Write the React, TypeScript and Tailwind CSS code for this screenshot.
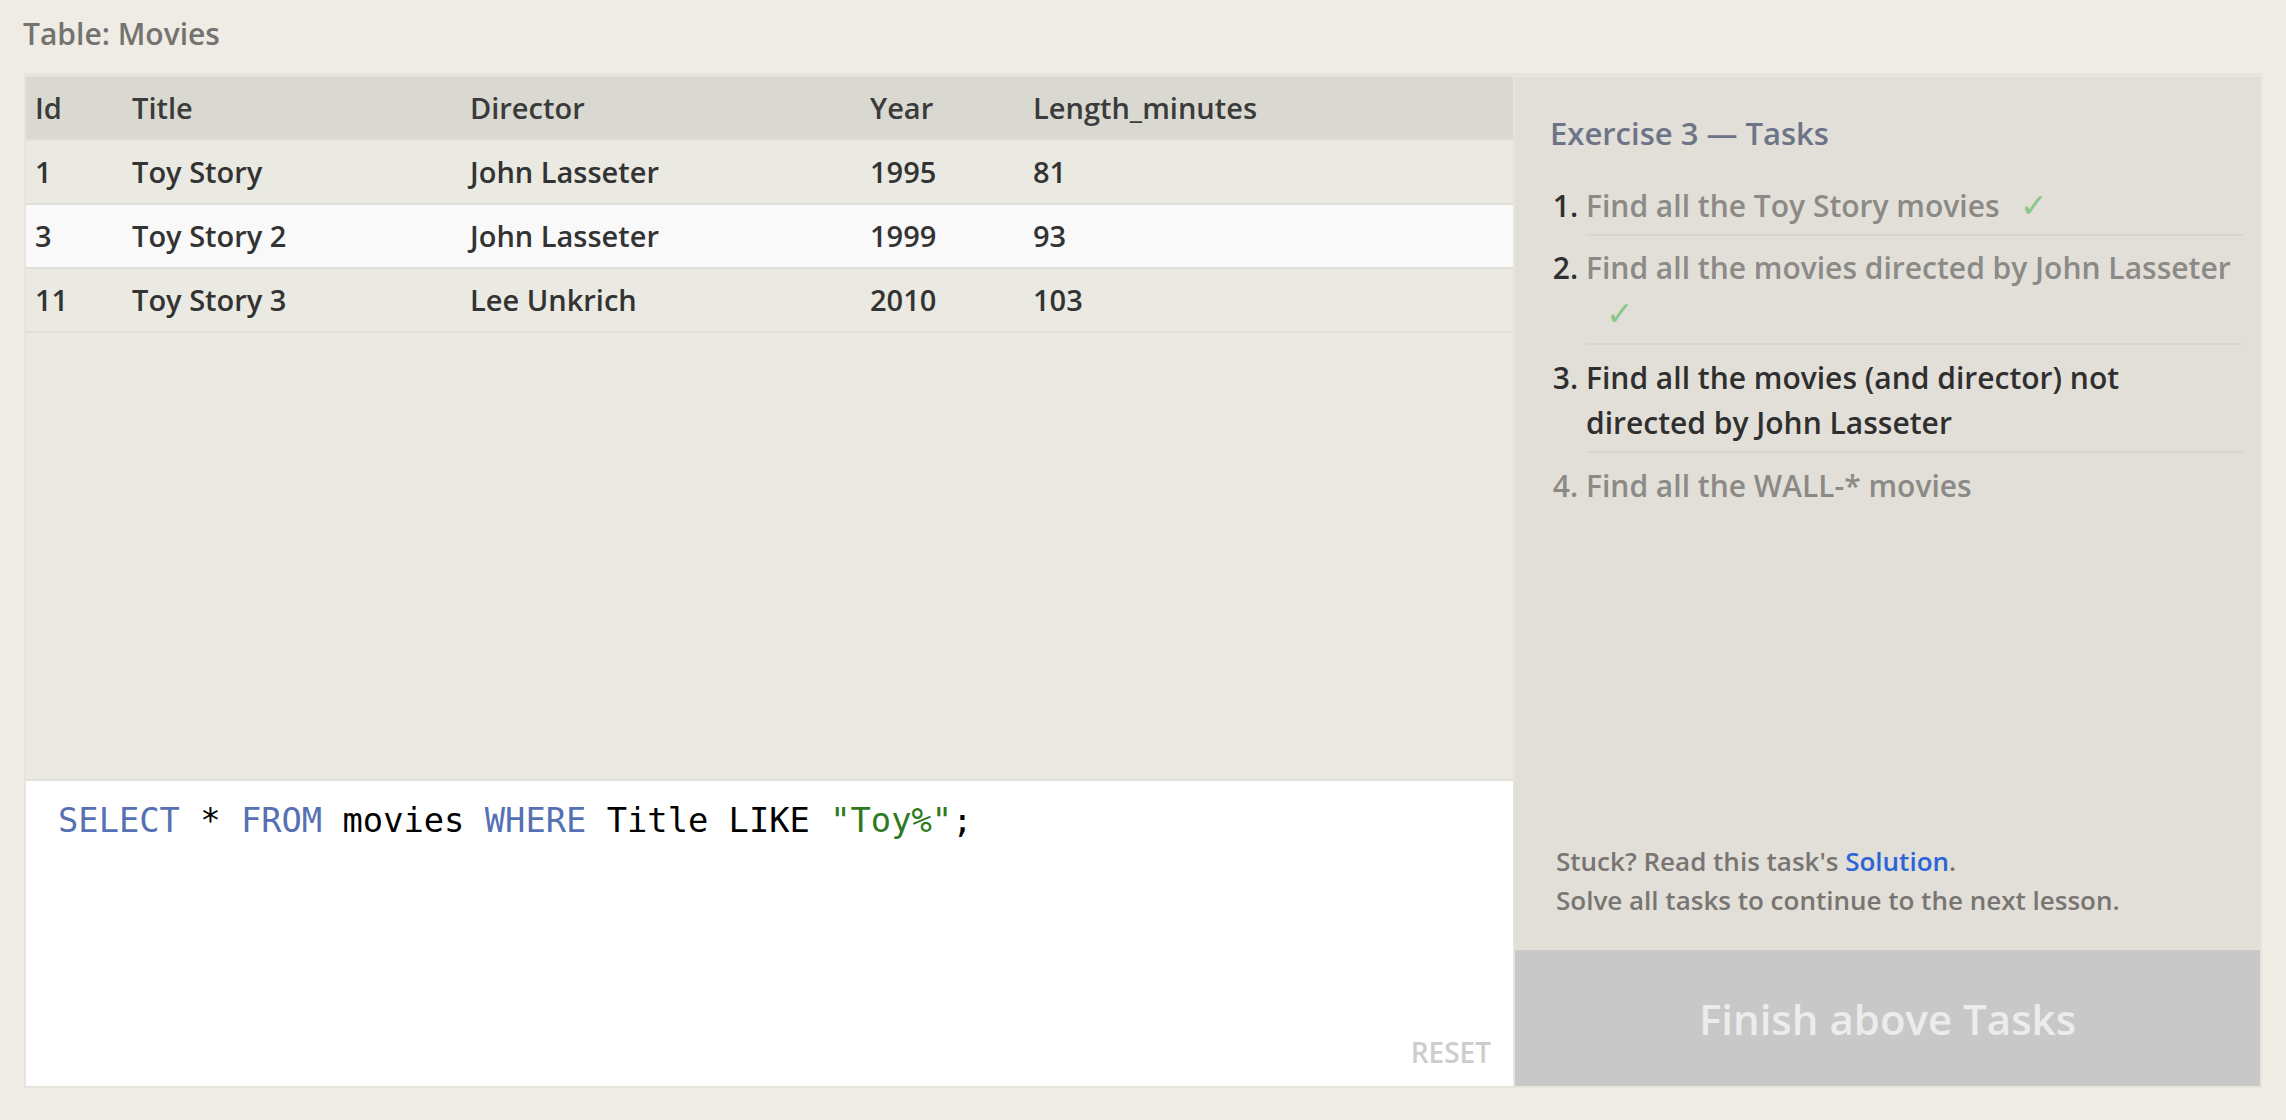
import React from "react"

const rows = [
  { id: "1", title: "Toy Story", director: "John Lasseter", year: "1995", length: "81" },
  { id: "3", title: "Toy Story 2", director: "John Lasseter", year: "1999", length: "93" },
  { id: "11", title: "Toy Story 3", director: "Lee Unkrich", year: "2010", length: "103" },
]

const cols = "grid grid-cols-[97px_338px_400px_163px_1fr] items-center pl-[9px]"

function Check() {
  return <span className="inline-block ml-[20px] text-[33px] text-[#88c788] font-normal">✓</span>
}

export default function App() {
  return (
    <div className="min-h-screen w-full bg-[#efece5] font-['Open_Sans',sans-serif] font-semibold">
      <div className="px-[23px] pt-[14px]">
        <h2 className="text-[30px] leading-[40px] text-[#747370]">Table: Movies</h2>
      </div>

      <div className="mx-[24px] mt-[19px] h-[1015px] flex border-2 border-t-4 border-[#e5e4dd] bg-[#e5e4dd]">
        {/* Left: results + editor */}
        <div className="w-[1487px] flex flex-col bg-[#eae9e2]">
          <div className={`${cols} h-[64px] bg-[#dad9d1] text-[29px] text-[#3b3b3b] border-b-2 border-[#e2e1da]`}>
            <div>Id</div>
            <div>Title</div>
            <div>Director</div>
            <div>Year</div>
            <div>Length_minutes</div>
          </div>
          {rows.map((r, i) => (
            <div
              key={r.id}
              className={`${cols} h-[64px] text-[29px] text-[#333333] border-b-2 border-[#dfded8] ${
                i === 1 ? "bg-[#f9f9f9]" : "bg-[#eae9e2]"
              }`}
            >
              <div>{r.id}</div>
              <div>{r.title}</div>
              <div>{r.director}</div>
              <div>{r.year}</div>
              <div>{r.length}</div>
            </div>
          ))}
          <div className="flex-1" />

          {/* Editor */}
          <div className="h-[307px] border-t-2 border-[#e2e1da] bg-white flex flex-col px-[32px] pt-[18px] pb-[16px]">
            <div className="font-['DejaVu_Sans_Mono',monospace] font-normal text-[33.75px] leading-[44px] text-black whitespace-pre">
              <span className="text-[#5671b3]">SELECT</span> * <span className="text-[#5671b3]">FROM</span> movies{" "}
              <span className="text-[#5671b3]">WHERE</span> Title LIKE <span className="text-[#2d7a1f]">"Toy%"</span>;
            </div>
            <div className="mt-auto self-end mr-[-10px] text-[28px] leading-[36px] text-[#cdcdcd]">RESET</div>
          </div>
        </div>

        {/* Right: tasks */}
        <div className="ml-[2px] flex-1 flex flex-col bg-[#e1dfd8]">
          <div className="pl-[35px] pr-[17px] pt-[34px]">
            <h3 className="text-[31px] leading-[44px] text-[#6d7487]">Exercise 3 — Tasks</h3>
            <ol className="mt-[18px] list-decimal pl-[36px] text-[30px] leading-[45px]">
              <li className="text-[#2f2f2f] pt-[9px] pb-[6px] border-b-2 border-[#d8d6ce]">
                <span className="text-[#8b8a86]">Find all the Toy Story movies</span>
                <Check />
              </li>
              <li className="text-[#2f2f2f] pt-[9px] pb-[7px] border-b-2 border-[#d8d6ce]">
                <span className="text-[#8b8a86]">Find all the movies directed by John Lasseter</span>
                <Check />
              </li>
              <li className="text-[#2f2f2f] pt-[10px] pb-[6px] border-b-2 border-[#d8d6ce]">
                Find all the movies (and director) not directed by John Lasseter
              </li>
              <li className="text-[#8b8a86] pt-[10px] pb-[6px]">Find all the WALL-* movies</li>
            </ol>
          </div>

          <div className="mt-auto pl-[41px] pb-[30px] text-[26px] leading-[39px] text-[#787572]">
            <p>
              Stuck? Read this task's <a className="text-[#2c64d8]">Solution</a>.
            </p>
            <p>Solve all tasks to continue to the next lesson.</p>
          </div>
          <button className="h-[136px] w-full bg-[#c8c8c8] text-[42px] text-[#ececec]">Finish above Tasks</button>
        </div>
      </div>
    </div>
  )
}
